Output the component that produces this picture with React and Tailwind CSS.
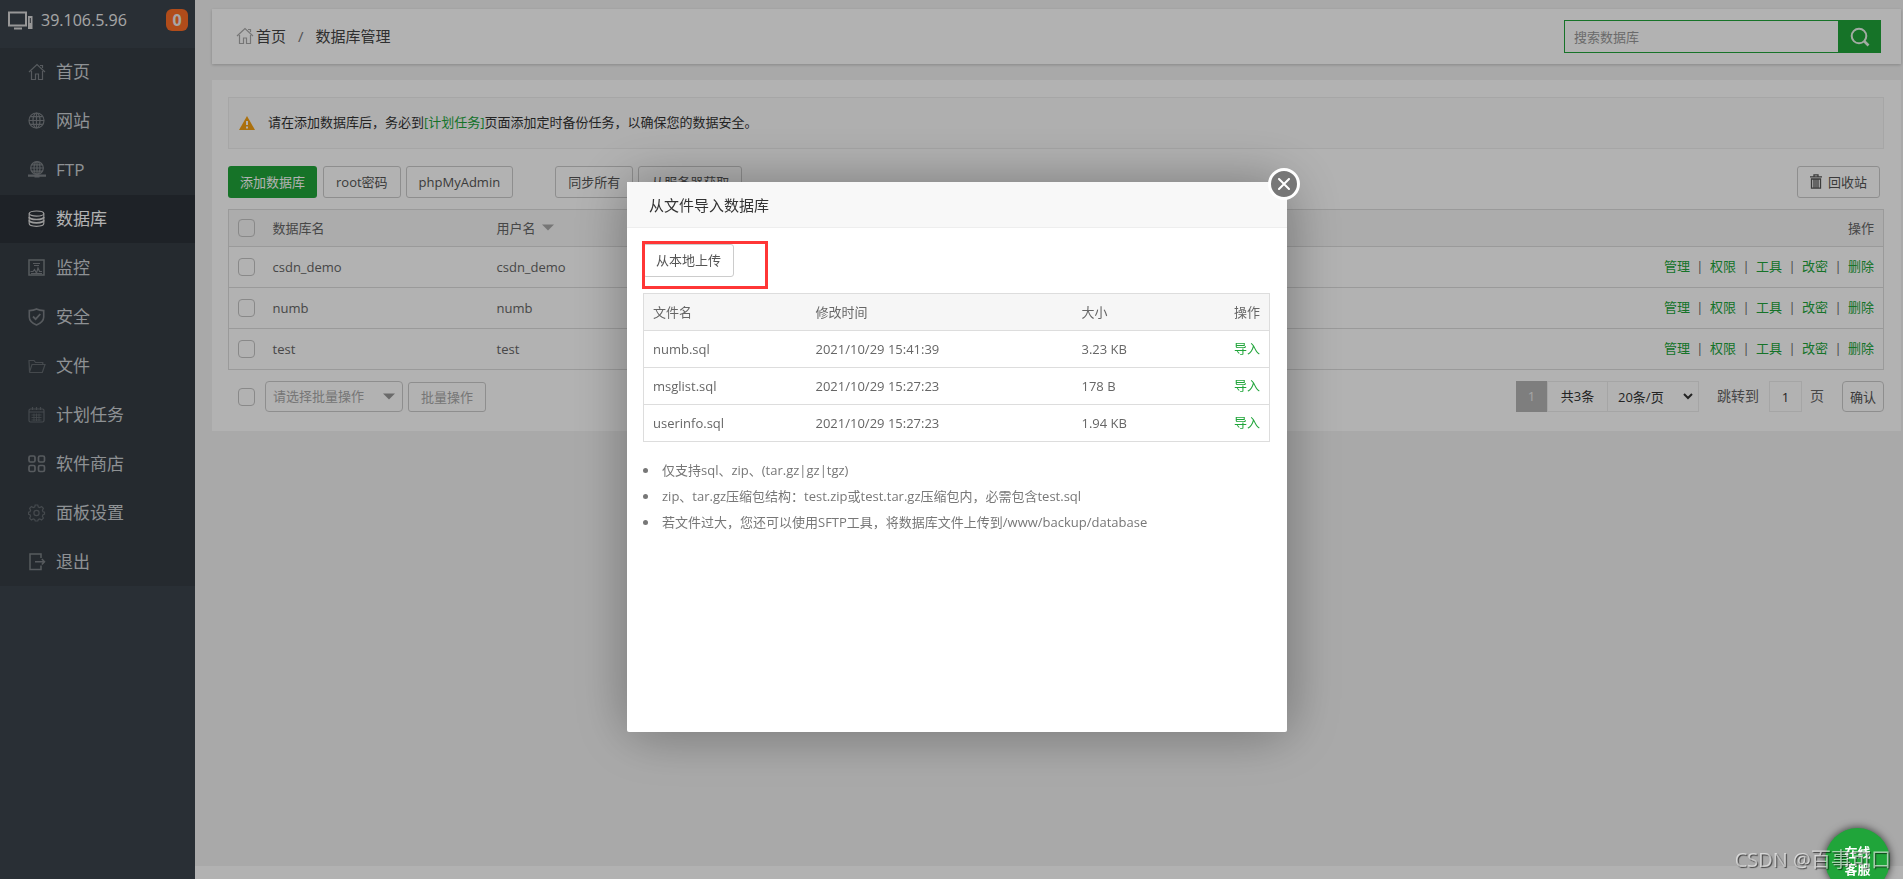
const menu = [
  { name: "首页", icon: "home" },
  { name: "网站", icon: "globe" },
  { name: "FTP", icon: "ftp" },
  { name: "数据库", icon: "database" },
  { name: "监控", icon: "monitor" },
  { name: "安全", icon: "shield" },
  { name: "文件", icon: "folder" },
  { name: "计划任务", icon: "calendar" },
  { name: "软件商店", icon: "apps" },
  { name: "面板设置", icon: "gear" },
  { name: "退出", icon: "exit" },
];

const databases = ["csdn_demo", "numb", "test"];
const actions = ["管理", "权限", "工具", "改密", "删除"];

const files = [
  { name: "numb.sql", time: "2021/10/29 15:41:39", size: "3.23 KB" },
  { name: "msglist.sql", time: "2021/10/29 15:27:23", size: "178 B" },
  { name: "userinfo.sql", time: "2021/10/29 15:27:23", size: "1.94 KB" },
];

const tips = [
  "仅支持sql、zip、(tar.gz|gz|tgz)",
  "zip、tar.gz压缩包结构：test.zip或test.tar.gz压缩包内，必需包含test.sql",
  "若文件过大，您还可以使用SFTP工具，将数据库文件上传到/www/backup/database",
];

const shapes = {
  home: <path d="M1 9 9 1.5 17 9M3.5 8v8.5h4V11h3v5.5h4V8M12 2.5h2.5V5" />,
  globe: (
    <>
      <circle cx="8.5" cy="8.5" r="7.5" />
      <ellipse cx="8.5" cy="8.5" rx="3.5" ry="7.5" />
      <path d="M8.5 1v15M1 8.5h15M2.5 4.7h12M2.5 12.3h12" />
    </>
  ),
  ftp: (
    <>
      <circle cx="9" cy="7" r="6.3" />
      <ellipse cx="9" cy="7" rx="3" ry="6.3" />
      <path d="M9 .7V15M2.7 7h12.6M3.7 3.8h10.6M3.7 10.2h10.6" />
      <path d="M0 14.7h18M6.5 15.3h5" strokeWidth="2.2" />
    </>
  ),
  database: (
    <>
      <ellipse cx="8.5" cy="3.6" rx="7.3" ry="2.6" />
      <path d="M1.2 3.6v10c0 1.5 3.3 2.7 7.3 2.7s7.3-1.2 7.3-2.7v-10" />
      <path d="M1.2 7c0 1.4 3.3 2.5 7.3 2.5S15.8 8.4 15.8 7M1.2 10.3c0 1.4 3.3 2.5 7.3 2.5s7.3-1.1 7.3-2.5" strokeWidth="1.7" />
    </>
  ),
  monitor: (
    <>
      <path d="M1 1h15v15H1z" strokeWidth="1.5" />
      <path d="M5 4.5h7M6 6.5h5" />
      <path d="M2.5 12.5H5l1.5-2 2 3.5L10 9l1.5 3.5H14M3 14.5h11" />
    </>
  ),
  shield: (
    <>
      <path d="M8.5 1c2.5 1.3 4.5 1.5 7.2 1.6V9c0 3.8-3.5 6.5-7.2 8C4.8 15.5 1.3 12.8 1.3 9V2.6C4 2.5 6 2.3 8.500 1z" strokeWidth="1.6" />
      <path d="m5 8.500 2.600 2.600L12.300 6" strokeWidth="1.8" />
    </>
  ),
  folder: <path d="M1.5 14.5 1 3.5h5l1.5 2h7.3v2M1.5 15 4 7.5h13L14.3 15.5H2z" />,
  calendar: (
    <>
      <rect x="1" y="3" width="15" height="13" rx="1.5" />
      <path d="M4.500 1v3M8.500 1v3M12.500 1v3M1 6h15" />
      <path d="M3.500 9h10M3.500 11.500h10M3.500 14h10M6 7.500V15M8.500 7.500V15M11 7.500V15" strokeWidth=".8" />
    </>
  ),
  apps: (
    <g strokeWidth="1.7">
      <rect x="1" y="1" width="6" height="6" rx="1.5" />
      <rect x="10.5" y="1" width="6" height="6" rx="1.5" />
      <rect x="1" y="10.5" width="6" height="6" rx="1.5" />
      <rect x="10.5" y="10.5" width="6" height="6" rx="1.5" />
    </g>
  ),
  gear: (
    <>
      <path d="M7.2 1h2.600l.5 2 1.500.6 1.800-1 1.800 1.800-1 1.800.6 1.500 1.500.5v2l-1.500.6-.6 1.500 1 1.800-1.800 1.800-1.800-1-1.500.6-.5 1.500H7.200l-.5-1.500-1.500-.6-1.800 1-1.800-1.800 1-1.800L2 10.800.5 10.200v-2L2 7.700l.6-1.500-1-1.800 1.800-1.800 1.800 1L6.700 3z" />
      <circle cx="8.5" cy="9" r="2.6" />
    </>
  ),
  exit: <path d="M13 5V1H2v15.500h11v-4M7 8.800h9.500M13.800 6l2.700 2.800-2.700 2.800" strokeWidth="1.5" />,
};

const dimIcons = ["folder", "calendar", "gear"];

function iconColor(name) {
  if (name === "database") return "text-[#ddd]";
  return dimIcons.includes(name) ? "text-[#63696f]" : "text-[#7d8287]";
}

function Icon({ name, className = "" }) {
  return (
    <svg
      viewBox="0 0 18 18"
      fill="none"
      stroke="currentColor"
      strokeWidth="1.2"
      className={`size-[18px] shrink-0 ${className}`}
      aria-hidden="true"
    >
      {shapes[name]}
    </svg>
  );
}

function Caret({ className = "" }) {
  return (
    <svg viewBox="0 0 12 7" className={`w-3 h-[7px] ${className}`} aria-hidden="true">
      <path d="M0 .5h12L6 6.5z" fill="currentColor" />
    </svg>
  );
}

function Checkbox({ label }) {
  return (
    <input
      type="checkbox"
      aria-label={label}
      className="block shrink-0 appearance-none w-[17px] h-[18px] border border-[#c4c4c4] rounded-sm"
    />
  );
}

function Button({ children, className = "" }) {
  return (
    <button className={`h-8 px-3 pb-px border border-[#ccc] rounded-[3px] text-[#555] whitespace-nowrap ${className}`}>
      {children}
    </button>
  );
}

function Sidebar() {
  return (
    <aside className="w-[195px] shrink-0 bg-[#3c444d]">
      <div className="flex items-center h-12 pl-2 pr-[7px] pb-2 text-base text-[#eee]">
        <svg viewBox="0 0 25 19" className="w-[25px] h-[19px]" aria-hidden="true">
          <path d="M1 1.5h17v13H1z" fill="none" stroke="#d8d8d8" strokeWidth="2" />
          <path d="M6 17.5h8" stroke="#d8d8d8" strokeWidth="2" />
          <path d="M20 5h4.5v13H20z" fill="#d8d8d8" />
          <path d="M22.3 7v5" stroke="#3c444d" />
        </svg>
        <span className="ml-2">39.106.5.96</span>
        <span className="ml-auto w-[22px] h-[22px] rounded-md bg-[#fc6d26] text-center leading-[22px] font-bold text-base">0</span>
      </div>
      <nav className="bg-[#353d44]">
        {menu.map((m) => (
          <a
            key={m.name}
            href="#"
            className={`flex items-center h-12 mb-px pl-7 gap-[10px] text-[17px] ${
              m.icon === "database" ? "bg-[#2c3138] text-white" : "text-[#ccd0d4]"
            }`}
          >
            <Icon name={m.icon} className={iconColor(m.icon)} />
            {m.name}
          </a>
        ))}
      </nav>
    </aside>
  );
}

function Header() {
  return (
    <header className="flex items-center justify-between h-[55px] pl-6 pr-5 bg-white shadow-[0_1px_3px_rgba(0,0,0,0.2)]">
      <div className="flex items-center pb-[2px] text-[15px] text-[#444]">
        <Icon name="home" className="text-[#aaa] mr-[2px]" />
        <a href="#">首页</a>
        <span className="mx-3 text-[#777]">/</span>
        <span>数据库管理</span>
      </div>
      <form className="flex h-[33px]">
        <input
          aria-label="搜索数据库"
          placeholder="搜索数据库"
          className="w-[274px] px-[9px] border border-r-0 border-[#20a53a] placeholder:text-[#999] outline-none"
        />
        <button type="button" aria-label="搜索" className="flex items-center justify-center w-[43px] bg-[#20a53a]">
          <svg viewBox="0 0 20 20" className="size-5" fill="none" stroke="#e8f5ea" strokeWidth="2" aria-hidden="true">
            <circle cx="9" cy="9" r="7.3" />
            <path d="m14 14 4.5 4.5" strokeWidth="2.6" />
          </svg>
        </button>
      </form>
    </header>
  );
}

function DatabaseTable() {
  return (
    <table className="w-full mt-[11px] border border-[#ddd] text-left">
      <thead>
        <tr className="h-[37px] bg-[#f6f6f6] border-b border-[#ddd] text-[#666]">
          <th className="w-9 pl-[9px]"><Checkbox label="全选" /></th>
          <th className="w-[224px] pl-2 pb-px font-normal">数据库名</th>
          <th className="pl-2 pb-px font-normal">
            <span className="flex items-center gap-[6px]">用户名 <Caret className="text-[#aaa]" /></span>
          </th>
          <th className="pr-[9px] pb-px font-normal text-right">操作</th>
        </tr>
      </thead>
      <tbody>
        {databases.map((db) => (
          <tr key={db} className="h-[41px] border-b border-[#ddd] text-[#666]">
            <td className="pl-[9px]"><Checkbox label={db} /></td>
            <td className="pl-2">{db}</td>
            <td className="pl-2">{db}</td>
            <td className="pr-[9px] pb-[2px]">
              <div className="flex justify-end">
                {actions.map((a, i) => (
                  <span key={a} className="flex">
                    {i > 0 && <span className="w-5 text-center">|</span>}
                    <a href="#" className="text-[#20a53a]">{a}</a>
                  </span>
                ))}
              </div>
            </td>
          </tr>
        ))}
      </tbody>
    </table>
  );
}

function TableFooter() {
  return (
    <div className="flex items-center justify-between mt-[11px]">
      <div className="flex items-center pl-[10px]">
        <Checkbox label="全选当前页" />
        <div className="relative ml-[10px]">
          <select
            aria-label="批量操作"
            className="block appearance-none w-[138px] h-[31px] pl-[7px] pb-[2px] border border-[#ccc] rounded-sm text-[#aaa] bg-white"
          >
            <option>请选择批量操作</option>
          </select>
          <Caret className="absolute right-2 top-3 text-[#999]" />
        </div>
        <button className="ml-[5px] h-[30px] px-3 border border-[#ccc] rounded-[3px] text-[#aaa]">批量操作</button>
      </div>
      <div className="flex items-center h-[31px] text-[#333]">
        <span className="w-[31px] h-full leading-[31px] text-center bg-[#b5b5b5] text-[#eee]">1</span>
        <span className="w-[61px] h-full leading-[29px] text-center border border-[#ececec]">共3条</span>
        <div className="relative h-full">
          <select
            aria-label="每页条数"
            className="block appearance-none w-[91px] h-full pl-[10px] border border-l-0 border-[#ececec] bg-white"
          >
            <option>20条/页</option>
          </select>
          <svg viewBox="0 0 10 7" className="absolute right-[6px] top-3 w-[10px] h-[7px]" fill="none" stroke="#333" strokeWidth="2" aria-hidden="true">
            <path d="m1 1 4 4 4-4" />
          </svg>
        </div>
        <label htmlFor="page" className="ml-[18px] pb-[2px] text-sm text-[#666]">跳转到</label>
        <input id="page" defaultValue="1" className="ml-[10px] w-[33px] h-full text-center border border-[#ececec]" />
        <span className="ml-2 pb-[2px] text-sm text-[#666]">页</span>
        <button className="ml-[18px] w-[42px] h-full border border-[#ccc] rounded-sm text-[#555]">确认</button>
      </div>
    </div>
  );
}

function ImportDialog() {
  return (
    <div
      role="dialog"
      aria-label="从文件导入数据库"
      className="relative w-[660px] h-[550px] bg-white rounded-xs shadow-[1px_1px_55px_rgba(0,0,0,0.35)]"
    >
      <h2 className="h-[46px] leading-[46px] pl-[22px] text-[15px] text-[#333] bg-[#f8f8f8] border-b border-[#eee]">
        从文件导入数据库
      </h2>
      <button
        aria-label="关闭"
        className="absolute -right-[13px] -top-[14px] flex items-center justify-center size-8 rounded-full border-3 border-white bg-[#777]"
      >
        <svg viewBox="0 0 12 12" className="size-3" stroke="white" strokeWidth="2" strokeLinecap="round" aria-hidden="true">
          <path d="m1 1 10 10M11 1 1 11" />
        </svg>
      </button>
      <div className="pl-4 pr-[17px] pt-4 text-[#666]">
        <div className="relative">
          <Button className="h-[33px]">从本地上传</Button>
          <div className="absolute -left-px -top-[3px] w-[126px] h-12 border-3 border-[#ff3636]" />
        </div>
        <table className="w-full mt-4 border border-[#ddd] text-left">
          <thead>
            <tr className="h-[37px] bg-[#f6f6f6] border-b border-[#ddd]">
              <th className="w-[163px] pl-[9px] pb-px font-normal">文件名</th>
              <th className="w-[266px] pl-[9px] pb-px font-normal">修改时间</th>
              <th className="pl-[9px] pb-px font-normal">大小</th>
              <th className="pr-[9px] pb-px font-normal text-right">操作</th>
            </tr>
          </thead>
          <tbody>
            {files.map((f) => (
              <tr key={f.name} className="h-[37px] border-b border-[#ddd]">
                <td className="pl-[9px] pb-px">{f.name}</td>
                <td className="pl-[9px] pb-px">{f.time}</td>
                <td className="pl-[9px] pb-px">{f.size}</td>
                <td className="pr-[9px] pb-[2px] text-right"><a href="#" className="text-[#20a53a]">导入</a></td>
              </tr>
            ))}
          </tbody>
        </table>
        <ul className="mt-[15px] text-[#777]">
          {tips.map((t) => (
            <li key={t} className="flex items-center h-[26px]">
              <span className="size-[5px] mr-[14px] rounded-full bg-[#777]" />
              {t}
            </li>
          ))}
        </ul>
      </div>
    </div>
  );
}

export default function App() {
  return (
    <div className="flex min-h-screen bg-[#f3f3f3] text-[13px] leading-5 font-['Open_Sans','Noto_Sans_CJK_SC',sans-serif]">
      <Sidebar />
      <div className="flex-1 flex flex-col">
        <main className="pl-[17px] pr-[2px] pt-[9px]">
          <Header />
          <section className="mt-4 pl-4 pr-[17px] pt-[17px] pb-[19px] bg-white">
            <div className="flex items-center h-[52px] pl-[10px] border border-[#eee] bg-[#fbfbfb] text-[#333]">
              <svg viewBox="0 0 16 14" className="w-4 h-[14px] mr-[13px]" aria-hidden="true">
                <path d="M8 0 16 14H0z" fill="#f5a113" />
                <path d="M8 5v4M8 10.5v2" stroke="white" strokeWidth="2" />
              </svg>
              <p className="pb-[2px]">
                请在添加数据库后，务必到<a href="#" className="text-[#20a53a]">[计划任务]</a>页面添加定时备份任务，以确保您的数据安全。
              </p>
            </div>
            <div className="flex gap-[5px] mt-[17px]">
              <button className="h-8 px-3 pb-px mr-px rounded-[3px] bg-[#20a53a] text-white">添加数据库</button>
              <Button>root密码</Button>
              <Button>phpMyAdmin</Button>
              <Button className="ml-[37px]">同步所有</Button>
              <Button>从服务器获取</Button>
              <Button className="flex items-center gap-[6px] ml-auto mr-1">
                <svg viewBox="0 0 12 15" className="w-3 h-[15px]" fill="none" stroke="currentColor" strokeWidth="1.3" aria-hidden="true">
                  <path d="M0 2.8h12M4 2.5V.8h4v1.7M1.5 5h9v9.2h-9zM4 5v9M6 5v9M8 5v9" />
                </svg>
                回收站
              </Button>
            </div>
            <DatabaseTable />
            <TableFooter />
          </section>
        </main>
        <footer className="mt-auto h-[13px] bg-white" />
      </div>

      <div className="fixed inset-0 flex items-start justify-center pt-[182px] pl-[11px] bg-black/30">
        <ImportDialog />
      </div>

      <a
        href="#"
        className="fixed right-[13px] -bottom-[14px] flex flex-col items-center size-[65px] pt-4 rounded-full bg-[#20a53a] text-white font-bold leading-[17px] shadow-[0_0_8px_rgba(0,0,0,0.7)]"
      >
        <span>在线</span>
        <span>客服</span>
      </a>
      <p className="fixed right-3 bottom-[5px] text-xl leading-7 text-white/60 [text-shadow:1px_1px_1px_rgba(0,0,0,0.6)]">
        CSDN @百事可口
      </p>
    </div>
  );
}
